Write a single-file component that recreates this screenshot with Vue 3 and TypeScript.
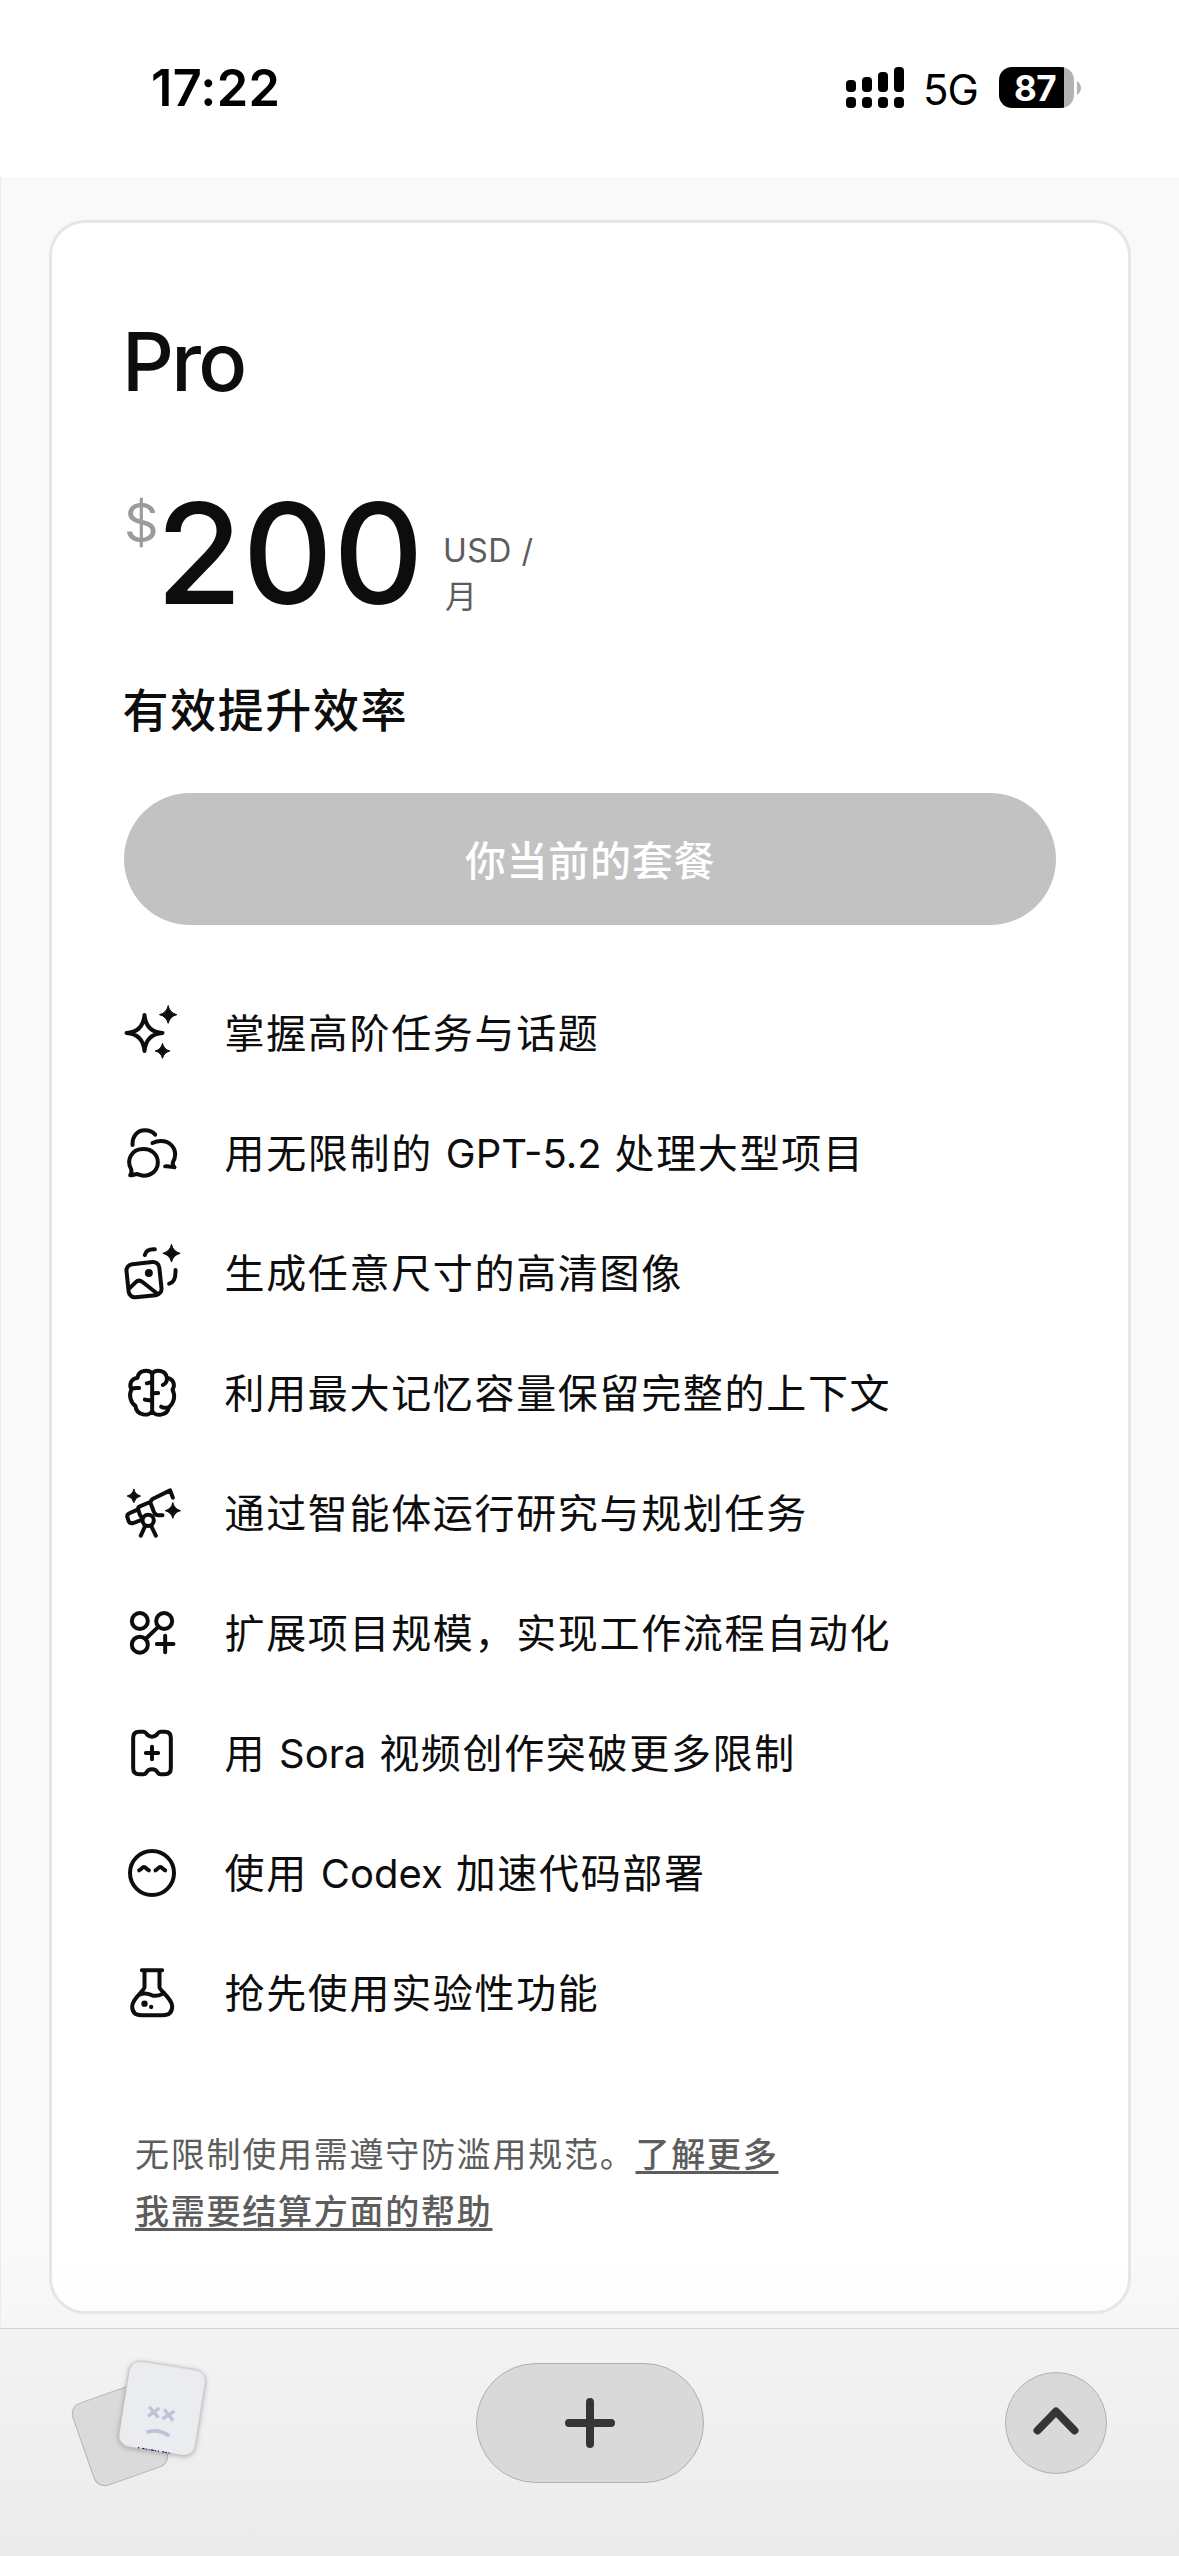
<script setup lang="ts">
interface Feature {
  icon: string
  text: [string, string, string]
}

const features: Feature[] = [
  { icon: 'sparkles', text: ['掌握高阶任务与话题', '', ''] },
  { icon: 'chats', text: ['用无限制的', 'GPT-5.2', '处理大型项目'] },
  { icon: 'images', text: ['生成任意尺寸的高清图像', '', ''] },
  { icon: 'brain', text: ['利用最大记忆容量保留完整的上下文', '', ''] },
  { icon: 'telescope', text: ['通过智能体运行研究与规划任务', '', ''] },
  { icon: 'nodes', text: ['扩展项目规模，实现工作流程自动化', '', ''] },
  { icon: 'ticket', text: ['用', 'Sora', '视频创作突破更多限制'] },
  { icon: 'face', text: ['使用', 'Codex', '加速代码部署'] },
  { icon: 'flask', text: ['抢先使用实验性功能', '', ''] },
]

const star = (x: number, y: number, r: number): string => {
  const k = r * 0.2
  return `M${x} ${y - r}Q${x + k} ${y - k} ${x + r} ${y}Q${x + k} ${y + k} ${x} ${y + r}Q${x - k} ${y + k} ${x - r} ${y}Q${x - k} ${y - k} ${x} ${y - r}Z`
}
</script>

<template>
  <div class="screen" lang="zh-CN">
    <header class="status">
      <span class="time">17:22</span>
      <div class="indicators">
        <svg class="signal" width="58" height="41" viewBox="0 0 58 41">
          <rect x="0" y="13" width="10" height="12" rx="4" />
          <rect x="16" y="10" width="10" height="15" rx="4" />
          <rect x="32" y="5" width="10" height="20" rx="4" />
          <rect x="48" y="0" width="10" height="25" rx="4" />
          <rect v-for="i in 4" :key="i" :x="(i - 1) * 16" y="30" width="10" height="11" rx="4" />
        </svg>
        <span class="network">5G</span>
        <div class="battery">
          <div class="cell"><span>87</span></div>
          <svg class="nub" width="4" height="14" viewBox="0 0 4 14"><path d="M0 0Q4 3 4 7Q4 11 0 14Z" fill="#b3b3b3" /></svg>
        </div>
      </div>
    </header>

    <main class="page">
      <section class="card">
        <h1>Pro</h1>
        <div class="price">
          <span class="currency">$</span>
          <span class="amount">200</span>
          <span class="period">USD /<br /><span class="month">月</span></span>
        </div>
        <p class="tagline">有效提升效率</p>
        <button class="plan" disabled>你当前的套餐</button>

        <ul class="features">
          <li v-for="f in features" :key="f.icon">
            <svg v-if="f.icon === 'sparkles'" class="icon" viewBox="37.5 39 180 180">
              <path d="M105 75C108 108 125 127 159 129C125 131 108 150 105 183C102 150 85 131 51 129C85 127 102 108 105 75Z" />
              <path class="solid" :d="star(176, 74, 26)" />
              <path class="solid" :d="star(159, 183, 22)" />
            </svg>
            <svg v-else-if="f.icon === 'chats'" class="icon" viewBox="37.5 399 180 180">
              <path d="M62 556C66 550 67 544 65 538C49 508 67 477 102 477C128 477 145 495 145 517C145 541 127 557 102 557C94 557 88 554 82 552C76 553 69 556 62 556Z" />
              <path d="M69 465C68 437 85 421 106 421C120 421 131 427 137 434" />
              <path d="M129 459C137 455 145 453 154 453C179 453 197 470 197 494C197 503 193 511 190 517C189 523 192 529 195 532C187 531 176 527 167 529" />
            </svg>
            <svg v-else-if="f.icon === 'images'" class="icon" viewBox="37.5 759 180 180">
              <rect x="54" y="819" width="99" height="100" rx="19" transform="rotate(-6 103.500 869)" />
              <path d="M62 893L78 877Q88 867 99 876L141 909" />
              <circle class="dot" cx="118" cy="849" r="12" />
              <path d="M106 795C109 783 118 777 136 778M198 840C199 862 194 877 179 881" />
              <path class="solid" :d="star(186, 790, 26)" />
            </svg>
            <svg v-else-if="f.icon === 'brain'" class="icon" viewBox="37.5 69 180 180">
              <path d="M128 101C119 87 87 89 84 113C66 116 57 132 66 148C57 165 63 188 78 198C80 226 120 232 128 212M128 101C137 87 169 89 172 113C190 116 199 132 189 149C199 168 193 190 178 202C174 227 136 232 128 212V101" />
              <path d="M66 147C73 143 82 144 89 144M112 130L128 126M106 179C112 181 120 181 128 180M128 160L146 159M160 135C169 131 173 124 172 114M155 200C162 204 170 204 178 202" />
            </svg>
            <svg v-else-if="f.icon === 'telescope'" class="icon" viewBox="37.5 429 180 180">
              <path d="M86 508L61 519Q51 523 54 533L57 542Q61 552 72 549L98 539M86 508L90 521Q92 529 99 534M86 508Q85 501 91 499L122 486L129 477L182 451L190 473M122 486L133 515Q138 527 148 526H159" />
              <circle cx="116" cy="541" r="17" />
              <path d="M107 558L94 587M125 558L139 587" />
              <path class="solid" :d="star(73, 468, 20)" />
              <path class="solid" :d="star(190, 512, 23)" />
            </svg>
            <svg v-else-if="f.icon === 'nodes'" class="icon" viewBox="37.5 789 180 180">
              <circle cx="91" cy="843" r="24" />
              <circle cx="164" cy="843" r="24" />
              <circle cx="91" cy="914" r="24" />
              <path d="M108 897L147 860M142 912H192M167 887V937" />
            </svg>
            <svg v-else-if="f.icon === 'ticket'" class="icon" viewBox="37.5 99 180 180">
              <path d="M89 125H102Q107 125 110 130Q116 140 127.500 140Q139 140 145 130Q148 125 153 125H166Q184 125 184 143V235Q184 253 166 253H153Q148 253 145 248Q139 238 127.500 238Q116 238 110 248Q107 253 102 253H89Q71 253 71 235V143Q71 125 89 125ZM109 189H146M127.500 170.500V207.500" />
            </svg>
            <svg v-else-if="f.icon === 'face'" class="icon" viewBox="37.5 459 180 180">
              <circle cx="127.500" cy="549" r="66" />
              <path d="M89 541C97 537 98 531 103 531C109 531 110 537 118 541M138 541C146 537 147 531 152 531C158 531 159 537 167 541" />
            </svg>
            <svg v-else class="icon" viewBox="37.5 819 180 180">
              <path d="M97 841H158M105 842V892C105 902 68 925 68 949Q68 976 96 976H160Q188 976 188 949C188 925 150 902 150 892V842M90 914C108 906 118 912 128 916C142 921 152 915 164 909" />
              <circle class="dot" cx="105" cy="941" r="9.500" />
              <circle class="dot" cx="125" cy="951" r="6.500" />
            </svg>
            <span class="label">{{ f.text[0] }}<template v-if="f.text[1]">&nbsp;<span class="latin">{{ f.text[1] }}</span>&nbsp;{{ f.text[2] }}</template></span>
          </li>
        </ul>

        <div class="notes">
          <p>无限制使用需遵守防滥用规范。<a>了解更多</a></p>
          <p><a>我需要结算方面的帮助</a></p>
        </div>
      </section>
    </main>

    <footer class="toolbar">
      <svg class="tabs" width="150" height="150" viewBox="78 159 450 450">
        <rect x="124" y="275" width="232" height="260" rx="34" transform="rotate(-19.300 240 405)" fill="#dadada" stroke="#b6b6b6" stroke-width="3" />
        <g class="front" transform="rotate(9 366.500 325)">
          <rect x="250.500" y="195" width="232" height="260" rx="34" fill="#ebecf0" stroke="#bdbdc1" stroke-width="2.500" />
        </g>
        <path d="M331 324L352 349M354 327L328 346M376 332L396 358M399 336L371 354" stroke="#c0c0d6" stroke-width="10" stroke-linecap="square" fill="none" />
        <path d="M319 397Q355 384 388 408" stroke="#c0c0d6" stroke-width="11" fill="none" />
        <path d="M294 443L393 460" stroke="#14145c" stroke-width="3.500" stroke-dasharray="4 9 7 3 5 4 3 4 9 3 4 5" fill="none" />
      </svg>
      <button class="add">
        <svg width="50" height="50" viewBox="0 0 50 50"><path d="M4 25H46M25 4V46" /></svg>
      </button>
      <button class="up">
        <svg width="46" height="28" viewBox="0 0 46 28"><path d="M4.500 23.500L23 4.500L41.500 23.500" /></svg>
      </button>
    </footer>
  </div>
</template>

<style>
body {
  margin: 0;
  background: #fff;
}
</style>

<style scoped>
.screen {
  width: 1179px;
  height: 2556px;
  display: flex;
  flex-direction: column;
  overflow: hidden;
  background: #fff;
  color: #0d0d0d;
  font-family: Inter, "Noto Sans CJK SC", sans-serif;
}
.screen * {
  box-sizing: border-box;
}
h1, p, ul {
  margin: 0;
  padding: 0;
}
button {
  border: 0;
  padding: 0;
  font-family: inherit;
}
.status {
  flex: none;
  height: 177px;
  display: flex;
  justify-content: space-between;
  align-items: flex-start;
  padding: 67px 98px 0 151px;
  color: #000;
}
.time {
  font-size: 50.500px;
  line-height: 42px;
  font-weight: 600;
  letter-spacing: 0.300px;
}
.indicators {
  display: flex;
  align-items: flex-start;
}
.network {
  width: 56px;
  margin: 2px 20px 0 19px;
  font-size: 42px;
  line-height: 41px;
  letter-spacing: -1px;
  white-space: nowrap;
}
.battery {
  display: flex;
  align-items: center;
  gap: 3px;
}
.cell {
  width: 75px;
  height: 41px;
  border-radius: 13px;
  background: linear-gradient(90deg, #000 65px, #b3b3b3 65px);
  color: #fff;
  font-size: 35px;
  line-height: 42px;
  font-weight: 700;
  padding-left: 15px;
  letter-spacing: -0.500px;
}
.page {
  flex: none;
  height: 2151px;
  padding: 43px 48px 0;
  border-left: 1px solid #ececec;
  background: linear-gradient(180deg, #f9f9f9 2080px, #f6f6f6 2151px);
}
.card {
  height: 2094px;
  padding: 97px 72px 0;
  border: 3px solid #e6e6e6;
  border-radius: 36px;
  background: linear-gradient(180deg, #fff 2030px, #fdfdfd 2090px);
}
h1 {
  margin-left: -2px;
  font-size: 81px;
  line-height: 84px;
  font-weight: 500;
  letter-spacing: -2.800px;
}
.price {
  display: flex;
  align-items: flex-start;
  height: 144px;
  margin-top: 77px;
}
.currency {
  width: 32px;
  margin-top: 15px;
  font-size: 54px;
  line-height: 54px;
  color: #9b9b9b;
}
.amount {
  width: 270px;
  font-size: 140px;
  line-height: 144px;
  font-weight: 500;
  letter-spacing: 0.300px;
}
.period {
  margin: 47px 0 0 17px;
  font-size: 32px;
  line-height: 46px;
  letter-spacing: 0.500px;
  color: #5d5d5d;
  white-space: nowrap;
}
.month {
  margin-left: 2px;
}
.tagline {
  margin: 55px 0 0 -1.500px;
  font-size: 46px;
  line-height: 60px;
  font-weight: 500;
  letter-spacing: 1.600px;
}
.plan {
  display: block;
  width: 100%;
  height: 132px;
  margin-top: 53px;
  padding-bottom: 3px;
  border-radius: 66px;
  background: #c2c2c2;
  color: #fff;
  font-size: 41px;
  font-weight: 500;
  letter-spacing: 0.700px;
}
.features {
  margin-top: 49px;
  list-style: none;
}
.features li {
  display: flex;
  align-items: center;
  gap: 43px;
  height: 120px;
}
.icon {
  flex: none;
  width: 60px;
  height: 60px;
  margin: -2px 0 0 -2.500px;
  fill: none;
  stroke: #0d0d0d;
  stroke-width: 12;
  stroke-linecap: round;
  stroke-linejoin: round;
}
.solid {
  fill: #0d0d0d;
  stroke-width: 3;
}
.dot {
  fill: #0d0d0d;
  stroke: none;
}
.label {
  font-size: 40px;
  line-height: 60px;
  letter-spacing: 1.670px;
  white-space: nowrap;
}
.latin {
  letter-spacing: 0;
}
.notes {
  margin: 72px 0 0 11px;
  font-size: 34px;
  line-height: 57px;
  letter-spacing: 1.750px;
  color: #5d5d5d;
}
.notes a {
  font-weight: 500;
  text-decoration: underline;
  text-decoration-skip-ink: none;
  text-decoration-thickness: 3px;
  text-underline-offset: 4px;
}
.toolbar {
  flex: 1;
  display: flex;
  justify-content: space-between;
  align-items: flex-start;
  padding: 24px 72px 0 66px;
  border-top: 1px solid #d6d6d6;
  background: linear-gradient(180deg, #f3f3f3, #ebebeb);
}
.front {
  filter: drop-shadow(0 3px 8px rgba(0, 0, 0, 0.25));
}
.toolbar button {
  display: flex;
  align-items: center;
  justify-content: center;
  border: 1px solid #b0b0b0;
  background: #d9d9d9;
}
.toolbar button path {
  fill: none;
  stroke: #353535;
  stroke-width: 8;
  stroke-linecap: round;
  stroke-linejoin: round;
}
.add {
  width: 228px;
  height: 120px;
  margin: 10px 42px 0 0;
  border-radius: 60px;
}
.up {
  width: 102px;
  height: 102px;
  margin-top: 19px;
  border-radius: 50%;
}
.up svg {
  margin-top: -4px;
}
</style>
